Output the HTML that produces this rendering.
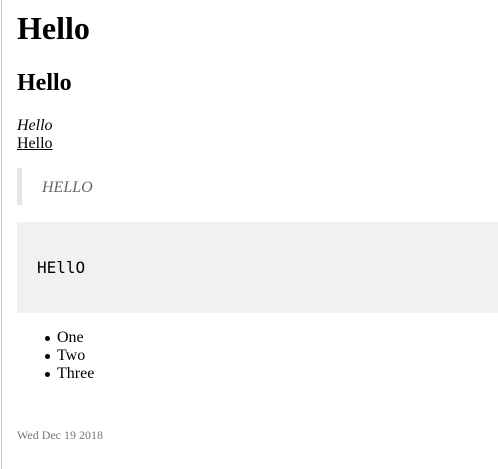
<!DOCTYPE html>
<html><head><meta charset="utf-8"><style>
html,body{margin:0;padding:0;background:#fff;width:498px;height:469px;overflow:hidden;position:relative;font-family:"Liberation Serif",serif;color:#000}
.bl{position:absolute;left:1px;top:0;width:1px;height:469px;background:#ccc}
.a{position:absolute;white-space:nowrap;line-height:1}
.d{position:absolute;left:45px;width:5px;height:5px;border-radius:50%;background:#000}
</style></head><body>
<div class="bl"></div>
<div class="a" style="left:17px;top:12px;font-size:32px;font-weight:bold">Hello</div>
<div class="a" style="left:17px;top:71px;font-size:24px;font-weight:bold">Hello</div>
<div class="a" style="left:17px;top:118px;font-size:16px;font-style:italic">Hello</div>
<div class="a" style="left:17px;top:136px;font-size:16px;text-decoration:underline">Hello</div>
<div style="position:absolute;left:17px;top:168px;width:5px;height:37px;background:#e5e5e5"></div>
<div class="a" style="left:42px;top:180px;font-size:16px;font-style:italic;color:#666">HELLO</div>
<div style="position:absolute;left:17px;top:222px;width:481px;height:91px;background:#f1f1f1"></div>
<div class="a" style="left:37px;top:260px;font-size:16px;font-family:'DejaVu Sans Mono',monospace">HEllO</div>
<div class="d" style="top:336px"></div>
<div class="d" style="top:354px"></div>
<div class="d" style="top:372px"></div>
<div class="a" style="left:57px;top:330px;font-size:16px">One</div>
<div class="a" style="left:57px;top:348px;font-size:16px">Two</div>
<div class="a" style="left:57px;top:366px;font-size:16px">Three</div>
<div class="a" style="left:17px;top:429px;font-size:12px;color:#777">Wed Dec 19 2018</div>
</body></html>
